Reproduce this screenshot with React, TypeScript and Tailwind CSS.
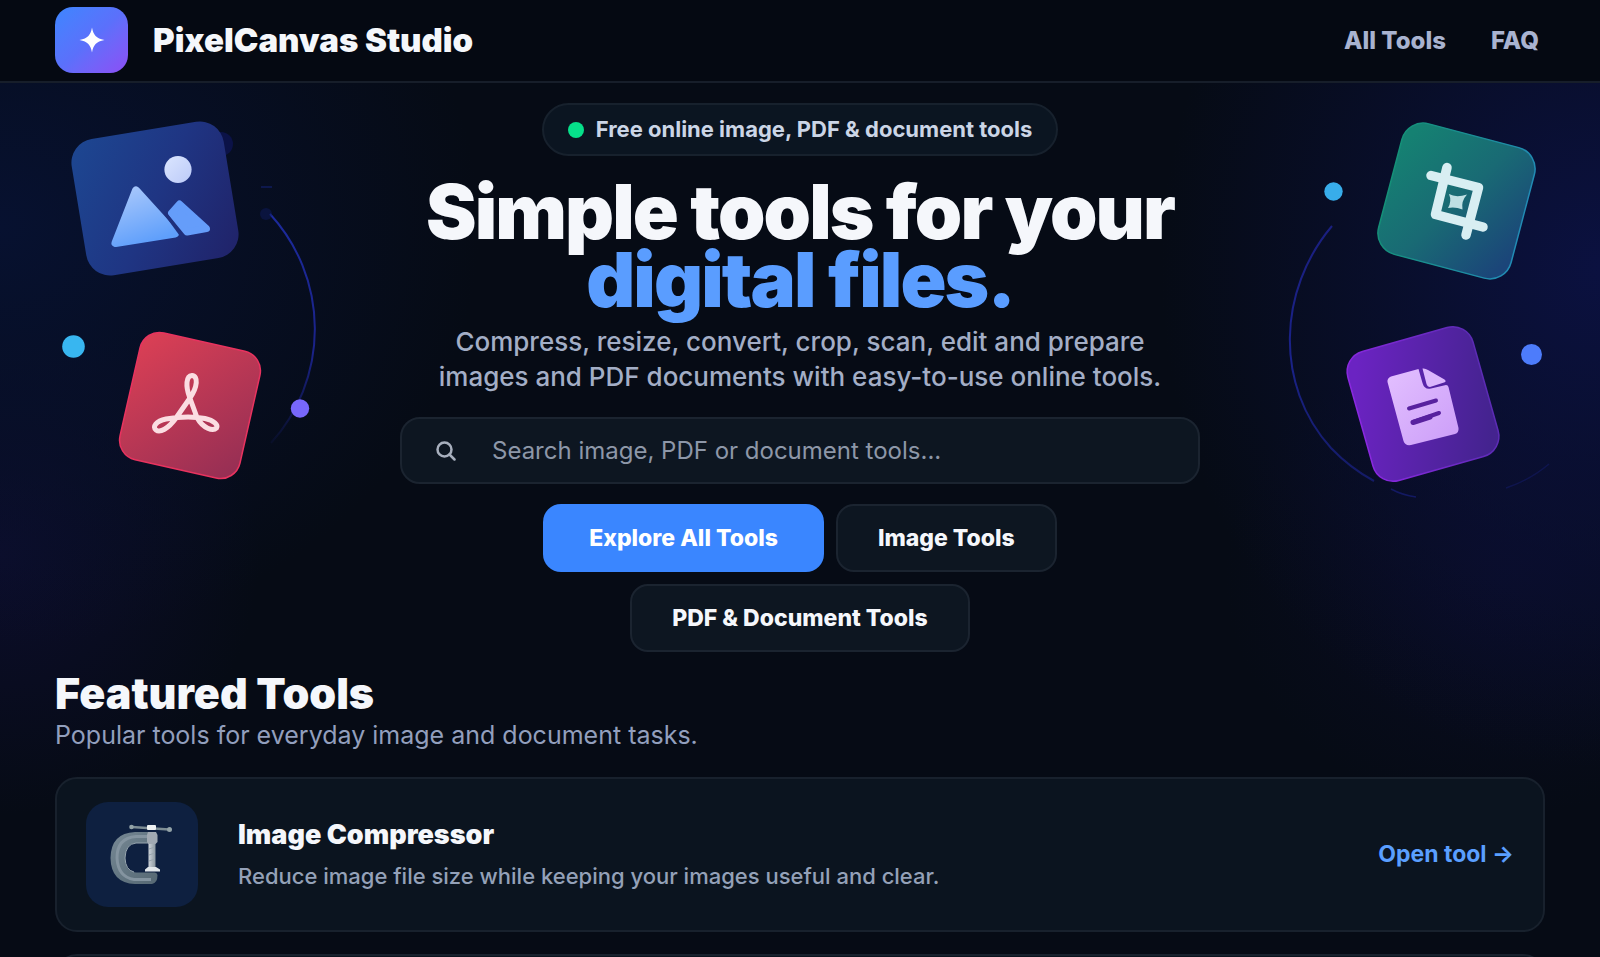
import React from "react";

function LeftArt() {
  return (
    <svg
      className="pointer-events-none absolute top-0 left-0"
      width="360"
      height="500"
      viewBox="0 83 360 500"
      fill="none"
      aria-hidden="true"
    >
      <defs>
        <linearGradient id="imgTile" x1="80" y1="150" x2="230" y2="250" gradientUnits="userSpaceOnUse">
          <stop offset="0" stopColor="#1d4590" />
          <stop offset="0.5" stopColor="#1f3583" />
          <stop offset="1" stopColor="#20246b" />
        </linearGradient>
        <linearGradient id="peak" x1="130" y1="185" x2="150" y2="242" gradientUnits="userSpaceOnUse">
          <stop offset="0" stopColor="#a9c8fb" />
          <stop offset="1" stopColor="#5f9ffb" />
        </linearGradient>
        <linearGradient id="sun" x1="0" y1="0" x2="1" y2="1">
          <stop offset="0" stopColor="#dbe6ff" />
          <stop offset="1" stopColor="#bccaf8" />
        </linearGradient>
        <linearGradient id="pdfTile" x1="0" y1="0" x2="1" y2="1">
          <stop offset="0" stopColor="#dd4055" />
          <stop offset="1" stopColor="#932e54" />
        </linearGradient>
        <linearGradient id="leftOrbit" x1="0" y1="217" x2="0" y2="445" gradientUnits="userSpaceOnUse">
          <stop offset="0" stopColor="#1c2a9c" />
          <stop offset="0.6" stopColor="#1a2288" />
          <stop offset="1" stopColor="#1a2288" stopOpacity="0.1" />
        </linearGradient>
      </defs>

      <path d="M270 214A170 170 0 0 1 271 443" stroke="url(#leftOrbit)" strokeWidth="2" />
      <path d="M261 187H272" stroke="#101d5c" strokeWidth="1.500" />
      <circle cx="266" cy="214" r="6" fill="#0d1a5c" fillOpacity="0.5" />
      <circle cx="221" cy="144" r="12" fill="#0b1247" />
      <rect x="78" y="129.500" width="154" height="138" rx="24" transform="rotate(-9.3 155 198.500)" fill="url(#imgTile)" />
      <g strokeLinejoin="round" strokeWidth="8">
        <path d="M136 190.500L115.500 243L175 233.500Z" fill="url(#peak)" stroke="url(#peak)" />
        <path
          d="M179.500 204L171.500 213L187 232L206.500 228.500Z"
          fill="#659dfa"
          stroke="#659dfa"
          strokeWidth="7"
        />
      </g>
      <path d="M165 213L184 239" stroke="#1f2f7b" strokeWidth="3" />
      <circle cx="178" cy="169.500" r="13.600" fill="url(#sun)" />

      <rect
        x="128.500"
        y="340.500"
        width="123"
        height="130"
        rx="20"
        transform="rotate(12.8 190 405.500)"
        fill="url(#pdfTile)"
        stroke="#e8335f"
        strokeWidth="1.500"
      />
      <path
        d="M192 375.500C198.500 376 197.500 387 190 398L176 418C168 429 160 433 156 430C152 427 156 421 166 419C180 416.500 195 416.500 205 418.500C214 420.500 218.500 425 216.500 428C213 431.500 203 428.500 197 417.500L189.500 397C185.500 386 186 376 192 375.500Z"
        stroke="#fbdde2"
        strokeWidth="5"
        strokeLinejoin="round"
      />
      <circle cx="73.500" cy="346.500" r="11.300" fill="#38b6f0" />
      <circle cx="300" cy="408.500" r="9.200" fill="#7867fb" />
    </svg>
  );
}

function RightArt() {
  return (
    <svg
      className="pointer-events-none absolute top-0 right-0"
      width="340"
      height="500"
      viewBox="1260 83 340 500"
      fill="none"
      aria-hidden="true"
    >
      <defs>
        <linearGradient id="cropTile" x1="0" y1="0.2" x2="1" y2="0.8">
          <stop offset="0" stopColor="#158172" />
          <stop offset="0.5" stopColor="#196a74" />
          <stop offset="1" stopColor="#1b4579" />
        </linearGradient>
        <linearGradient id="cropEdge" x1="0" y1="0" x2="1" y2="0">
          <stop offset="0" stopColor="#149078" />
          <stop offset="1" stopColor="#218bb4" />
        </linearGradient>
        <linearGradient id="docTile" x1="0" y1="0.3" x2="1" y2="0.7">
          <stop offset="0" stopColor="#6b23c2" />
          <stop offset="1" stopColor="#44238f" />
        </linearGradient>
        <linearGradient id="docEdge" x1="0" y1="0" x2="1" y2="0">
          <stop offset="0" stopColor="#8a28e0" />
          <stop offset="1" stopColor="#5b2bb4" />
        </linearGradient>
        <linearGradient id="sheet" x1="0" y1="0" x2="1" y2="1">
          <stop offset="0" stopColor="#e3c0ff" />
          <stop offset="1" stopColor="#cb9df8" />
        </linearGradient>
        <linearGradient id="rightOrbit" x1="0" y1="228" x2="0" y2="500" gradientUnits="userSpaceOnUse">
          <stop offset="0" stopColor="#1a1f80" />
          <stop offset="0.5" stopColor="#1a2288" />
          <stop offset="1" stopColor="#1a2288" stopOpacity="0.6" />
        </linearGradient>
      </defs>

      <path d="M1332 226C1278 290 1274 385 1331 448Q1350 468 1374 481" stroke="url(#rightOrbit)" strokeWidth="2" />
      <path d="M1391 489Q1402 495 1416 497" stroke="#1a2288" strokeOpacity="0.6" strokeWidth="1.500" />
      <path d="M1506 488Q1530 480 1549 464" stroke="#1a2288" strokeOpacity="0.35" strokeWidth="1.500" />

      <rect
        x="1388"
        y="133.500"
        width="137"
        height="135"
        rx="22"
        transform="rotate(14.8 1456.500 201)"
        fill="url(#cropTile)"
        stroke="url(#cropEdge)"
        strokeWidth="1.500"
      />
      <g stroke="#d8eef2" strokeLinecap="round" strokeLinejoin="round" strokeWidth="9.500">
        <path d="M1447 167.500L1435.500 214.500L1483 227" />
        <path d="M1431 175.500L1478.500 187.500L1466 235" />
      </g>
      <path
        d="M1449 194Q1456 198 1467 194.500Q1461 201 1462.500 209.500Q1455 206.500 1448 208Q1452 201 1449 194Z"
        fill="#bfe0e3"
      />

      <rect
        x="1358"
        y="337"
        width="130"
        height="134"
        rx="21"
        transform="rotate(-15.8 1423 404)"
        fill="url(#docTile)"
        stroke="url(#docEdge)"
        strokeWidth="1.500"
      />
      <path
        d="M1391 376.500L1418.500 369L1422.500 383Q1424.500 390 1431 388.500L1446 385Q1448 385 1448.500 387L1458.500 428Q1459 433 1455 434L1411 445Q1405 446 1403.500 441L1387.500 382Q1387 378 1391 376.500Z"
        fill="url(#sheet)"
      />
      <path
        d="M1422.500 368.500Q1425 368 1428 370L1444.500 379.500Q1447 381.500 1444 382.500L1430 387Q1427.500 387 1426.500 384Z"
        fill="#dcb6fd"
      />
      <path d="M1409 408.500L1436 400.500M1413 422L1439 413" stroke="#58219f" strokeLinecap="round" strokeWidth="4" />
      <path d="M1413 422.500L1430 417" stroke="#58219f" strokeLinecap="round" strokeWidth="5" />

      <circle cx="1333.500" cy="191.500" r="9.200" fill="#38adea" />
      <circle cx="1531.500" cy="354.500" r="10.500" fill="#4d7cfb" />
    </svg>
  );
}

function ClampIcon() {
  return (
    <svg width="66" height="64" viewBox="110 822 66 64" fill="none" aria-hidden="true">
      <defs>
        <linearGradient id="steel" x1="0" y1="0" x2="1" y2="1">
          <stop offset="0" stopColor="#788995" />
          <stop offset="0.45" stopColor="#667985" />
          <stop offset="1" stopColor="#566873" />
        </linearGradient>
        <linearGradient id="screw" x1="0" y1="0" x2="1" y2="0">
          <stop offset="0" stopColor="#cdd3d9" />
          <stop offset="1" stopColor="#8b979f" />
        </linearGradient>
      </defs>
      <path
        d="M157 831H136Q112 832 111.500 857Q112 882 136 883H153Q158.500 882 158.500 874Q158 871 155 871.500H137Q126 870 126 857Q126.500 843 137 842H157Z"
        fill="url(#steel)"
      />
      <path d="M150 835.500H137Q118 837 118 857Q119 876 135 878.500H152" stroke="#8494a0" strokeWidth="3" />
      <path d="M150 842H137Q126.500 843 126 857Q126.500 869 135 871" stroke="#97a5ae" strokeWidth="1" />
      <path d="M133 826L170 828.500" stroke="#7d8d94" strokeWidth="2.500" />
      <circle cx="132.500" cy="826" r="2.300" fill="#93a3a8" />
      <circle cx="170.500" cy="828.500" r="2.500" fill="#93a3a8" />
      <rect x="149.500" y="831" width="7" height="38" fill="url(#screw)" />
      <path d="M150 848L156 846M150 854L156 852M150 860L156 858" stroke="#98a4ad" strokeWidth="1" />
      <path d="M149 831H157L158.500 834V841L156.500 843H149.500L148 841V834Z" fill="#a1a9b2" />
      <rect x="148" y="824" width="9" height="5" rx="1" fill="#eef1f2" />
      <path d="M149 866H157L161 868.500V870.500H146V868.500Z" fill="#e1e6ea" />
    </svg>
  );
}

const tools = [
  {
    name: "Image Compressor",
    description: "Reduce image file size while keeping your images useful and clear.",
  },
];

export default function App() {
  return (
    <div className="h-screen overflow-hidden bg-[#060b15] font-['Inter',sans-serif] text-[#f5f7fb]">
      <header className="flex h-[83px] items-center justify-between border-b-2 border-[#171e2a] bg-[#050912] px-[55px] pb-[2px]">
        <a href="#" className="flex items-center gap-[25px]">
          <span className="flex h-[66px] w-[73px] items-center justify-center rounded-[18px] bg-linear-to-br from-[#3b86ff] via-[#5b70fb] to-[#8b4df5]">
            <svg width="26" height="26" viewBox="0 0 26 26" fill="white" aria-hidden="true">
              <path d="M13 0.500C14.500 8 17 11.500 25.500 13C17 14.500 14.500 18 13 25.500C11.500 18 9 14.500 0.500 13C9 11.500 11.500 8 13 0.500Z" />
            </svg>
          </span>
          <span className="text-[33px] leading-10 font-black">PixelCanvas Studio</span>
        </a>
        <nav className="flex gap-[45px] pt-[2px] pr-[6px] text-2xl font-extrabold text-[#a9b3d0]">
          <a href="#tools">All Tools</a>
          <a href="#faq">FAQ</a>
        </nav>
      </header>

      <main className="relative bg-[radial-gradient(ellipse_480px_420px_at_0%_14%,#071130,transparent),radial-gradient(ellipse_260px_260px_at_0%_46%,#0c0d2b,transparent),radial-gradient(ellipse_440px_500px_at_100%_18%,#0b1140,transparent),radial-gradient(ellipse_280px_240px_at_94%_48%,#0b0c2c99,transparent)]">
        <LeftArt />
        <RightArt />

        <section className="relative mx-auto flex max-w-[800px] flex-col items-center pt-5">
          <p className="flex h-[53px] items-center gap-3 rounded-full border-2 border-[#17212d] bg-[#0b1521] px-6 text-[22px] font-bold text-[#cbd5e6]">
            <span className="size-4 rounded-full bg-[#06e08a]" />
            Free online image, PDF &amp; document tools
          </p>
          <h1 className="mt-[21px] text-center text-[76px] leading-[68px] font-black tracking-tight">
            Simple tools for your <span className="text-[#5a9dff]">digital files.</span>
          </h1>
          <p className="mt-[11px] max-w-[740px] text-center text-[26px] leading-[35px] font-medium text-[#a3aec6]">
            Compress, resize, convert, crop, scan, edit and prepare images and PDF documents with easy-to-use
            online tools.
          </p>

          <label className="mt-[23px] flex h-[67px] w-full items-center gap-9 rounded-[20px] border-2 border-[#1b2430] bg-[#0d1621] pl-[34px]">
            <svg width="20" height="20" viewBox="0 0 20 20" fill="none" stroke="#a7afbd" strokeWidth="2.500" aria-hidden="true">
              <circle cx="8.500" cy="8.500" r="7" />
              <path d="M13.500 13.500L18.500 18.500" strokeLinecap="round" />
            </svg>
            <input
              type="search"
              aria-label="Search tools"
              placeholder="Search image, PDF or document tools..."
              className="h-full min-w-0 flex-1 bg-transparent text-2xl outline-none placeholder:text-[#8d97a8]"
            />
          </label>

          <div className="mt-5 flex max-w-[560px] flex-wrap justify-center gap-3 text-[23px] font-extrabold">
            <button className="h-[68px] rounded-[18px] bg-[#3a86ff] px-[46px] text-white">Explore All Tools</button>
            <button className="h-[68px] rounded-[18px] border-2 border-[#1b2430] bg-[#0d1621] px-10">Image Tools</button>
            <button className="h-[68px] rounded-[18px] border-2 border-[#1b2430] bg-[#0d1621] px-10">
              PDF &amp; Document Tools
            </button>
          </div>
        </section>

        <section id="tools" className="relative px-[55px] pt-[21px]">
          <h2 className="text-[43px] leading-10 font-black">Featured Tools</h2>
          <p className="mt-1 text-[25px] leading-9 text-[#929fbd]">Popular tools for everyday image and document tasks.</p>
          <div className="mt-6 flex flex-col gap-[22px]">
            {tools.map((tool) => (
              <article
                key={tool.name}
                className="flex h-[155px] items-center rounded-[22px] border-2 border-[#18212d] bg-[#0b141f] px-[29px]"
              >
                <span className="flex h-[105px] w-[112px] items-center justify-center rounded-[22px] bg-[#0e2040]">
                  <ClampIcon />
                </span>
                <div className="ml-10 flex-1">
                  <h3 className="text-[27px] leading-9 font-black">{tool.name}</h3>
                  <p className="mt-[7px] text-[22px] leading-8 font-medium text-[#94a1b8]">{tool.description}</p>
                </div>
                <a href="#compressor" className="text-[23px] font-bold text-[#5a9fff]">
                  Open tool →
                </a>
              </article>
            ))}
            <article className="h-[155px] rounded-[22px] border-2 border-[#18212d] bg-[#0b141f]" />
          </div>
        </section>
      </main>
    </div>
  );
}
